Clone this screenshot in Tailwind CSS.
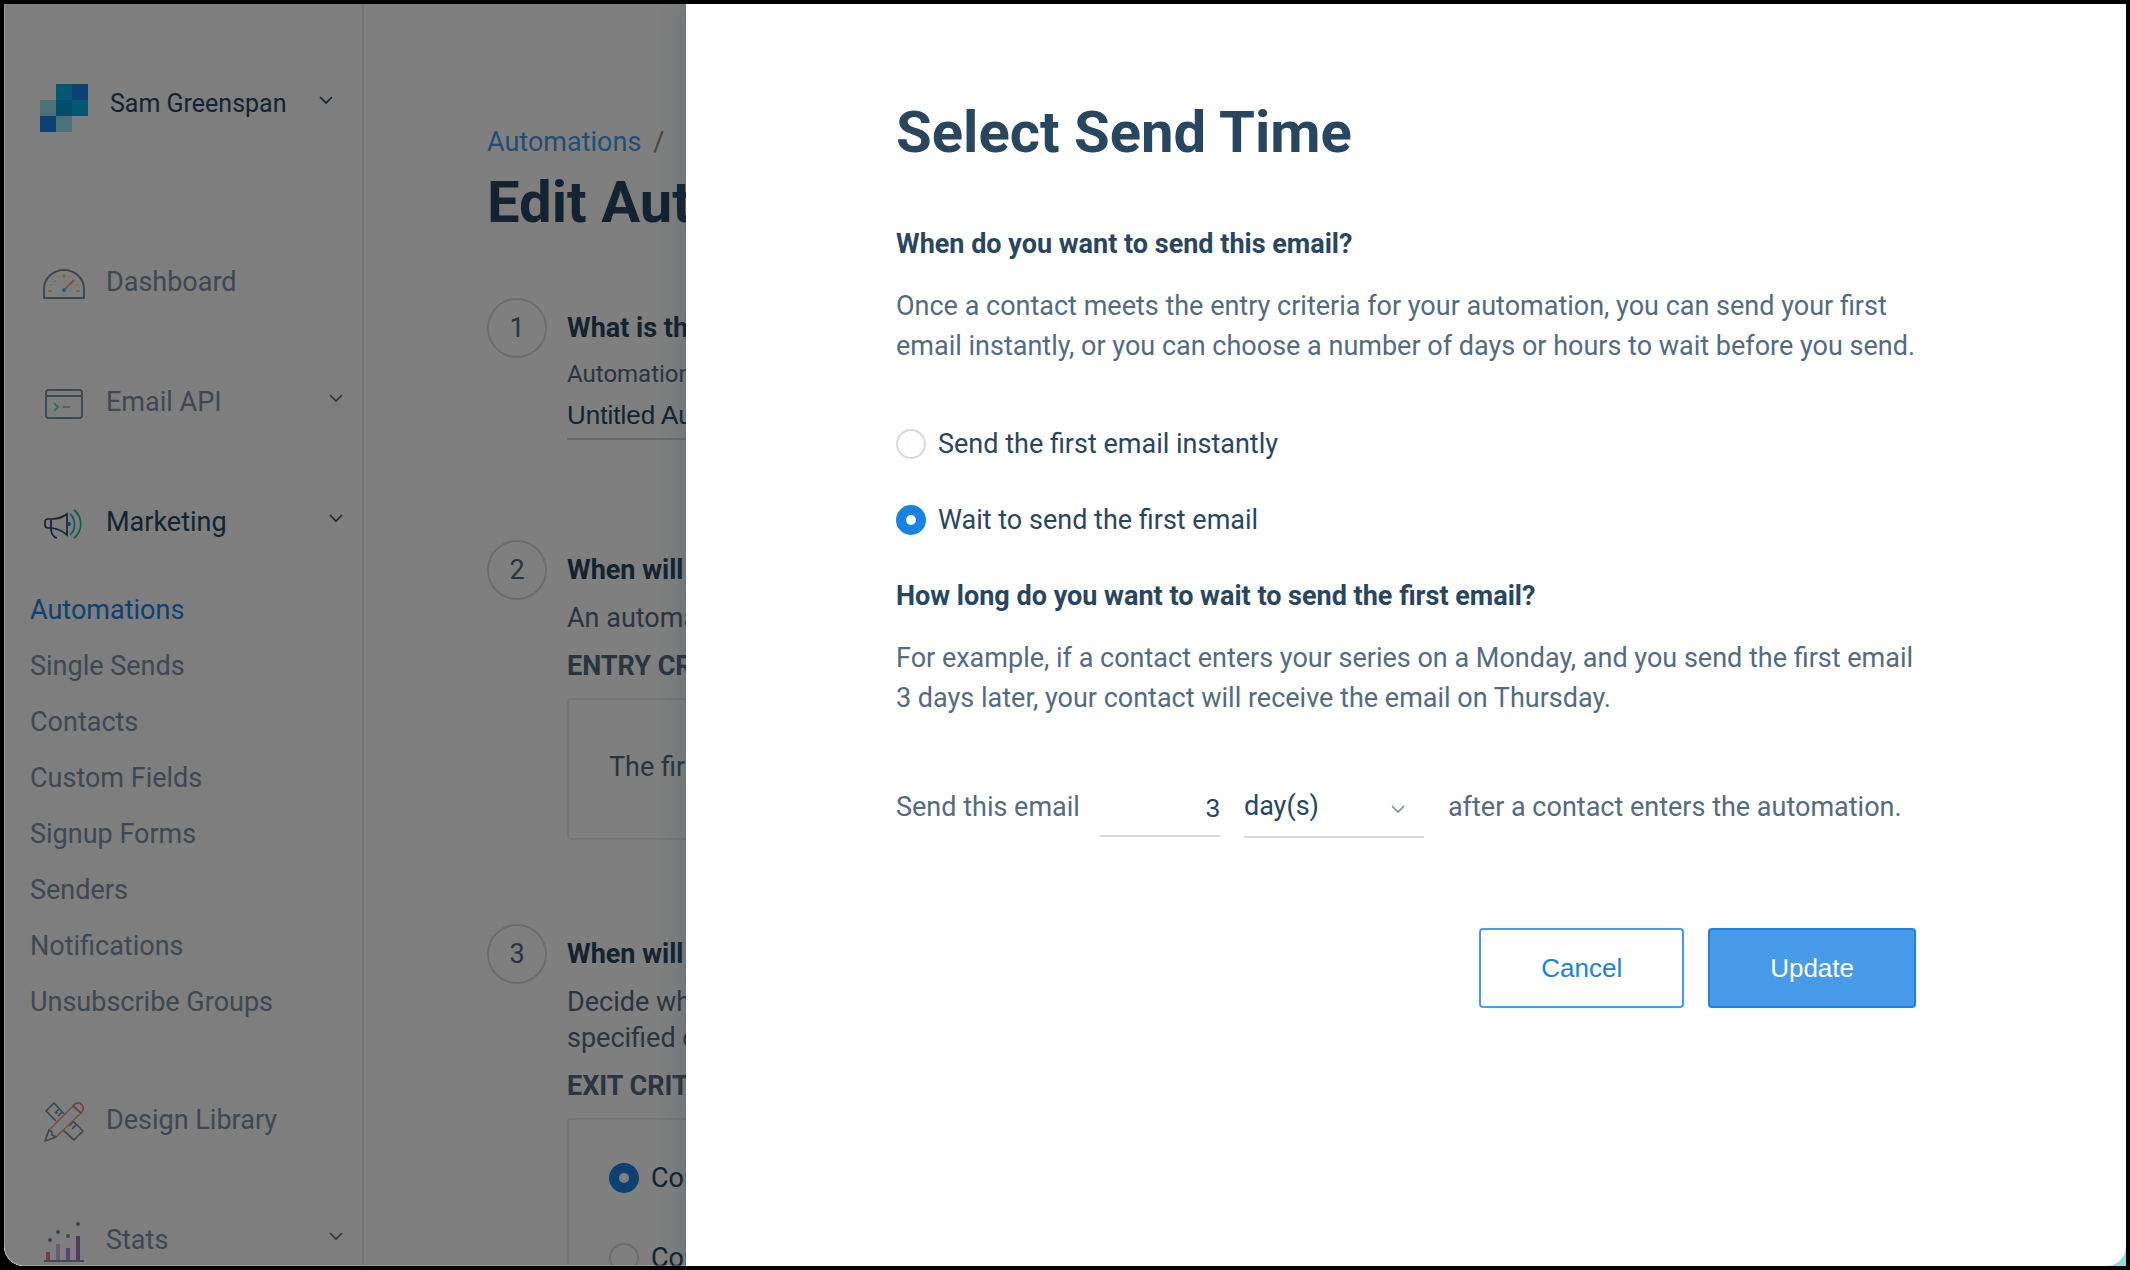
<!DOCTYPE html>
<html lang="en">
<head>
    <meta charset="UTF-8">
    <meta name="viewport" content="width=device-width, initial-scale=1.0">
    <title>Edit Automation</title>
    <script src="https://cdn.jsdelivr.net/npm/@tailwindcss/browser@4"></script>
</head>
<body class="bg-black font-['Roboto',sans-serif] text-[27px] leading-9 text-[#546b81]">
    <div class="h-screen p-1">
        <div class="h-full bg-linear-to-r from-black from-50% to-[#8edfe0] to-50%">
            <div class="relative h-full overflow-hidden rounded-b-[20px] bg-white flex">

                <!-- Sidebar -->
                <aside class="w-[360px] shrink-0 bg-[#fcfcfc] border-r-2 border-[#ebecee] text-[#7d90a5]">
                    <div class="h-[218px] pt-20 pl-9 pr-7 flex items-start">
                        <svg class="size-12 shrink-0" viewBox="0 0 48 48" shape-rendering="crispEdges" aria-hidden="true">
                            <path fill="#00b2e3" d="M16 0h16v16H16zM32 16h16v16H32z"/>
                            <path fill="#1a82e2" d="M32 0h16v16H32zM0 32h16v16H0z"/>
                            <path fill="#99e1f4" d="M0 16h16v16H0zM16 32h16v16H16z"/>
                            <path fill="#009dd9" d="M16 16h16v16H16z"/>
                        </svg>
                        <button class="ml-[22px] flex-1 h-10 flex items-center justify-between text-[25px] text-[#294661]">
                            Sam Greenspan
                            <svg class="size-4" viewBox="0 0 16 16" fill="none" stroke="currentColor" stroke-width="1.600" aria-hidden="true"><path d="M2 1l6 6 6-6"/></svg>
                        </button>
                    </div>

                    <nav>
                        <a href="#" class="h-[120px] pl-[38px] pr-[18px] flex items-center gap-5">
                            <span class="w-11 pt-1 flex justify-center">
                                <svg class="w-[42px] h-[30px]" viewBox="0 0 42 30" fill="none" stroke-width="2" aria-hidden="true">
                                    <path stroke="currentColor" d="M1 29V20a20 19 0 0 1 40 0v9z"/>
                                    <path stroke="#f0a090" d="M22 20l9-9"/>
                                    <circle cx="21" cy="21" r="2" fill="#5fb0f5"/>
                                    <path stroke="#f0d890" d="M5 22h4M33 22h4"/>
                                    <g fill="#f0d890"><circle cx="21" cy="7" r="2"/><circle cx="8" cy="16" r="1"/><circle cx="12" cy="12" r="1"/><circle cx="16" cy="8" r="1"/><circle cx="26" cy="8" r="1"/><circle cx="34" cy="16" r="1"/></g>
                                </svg>
                            </span>
                            Dashboard
                        </a>
                        <a href="#" class="h-[120px] pl-[38px] pr-[18px] flex items-center gap-5">
                            <span class="w-11 pt-1 flex justify-center">
                                <svg class="w-[38px] h-[30px]" viewBox="0 0 38 30" fill="none" stroke-width="2" aria-hidden="true">
                                    <rect stroke="currentColor" x="1" y="1" width="36" height="28" rx="3"/>
                                    <path stroke="currentColor" d="M1 7h36"/>
                                    <path stroke="#62e09c" d="M9 14l4 4-4 4"/>
                                    <path stroke="#a8d880" d="M18 18h7"/>
                                </svg>
                            </span>
                            <span class="flex-1">Email API</span>
                            <svg class="size-4" viewBox="0 0 16 16" fill="none" stroke="#546b81" stroke-width="1.600" aria-hidden="true"><path d="M2 1l6 6 6-6"/></svg>
                        </a>
                        <a href="#" class="h-[120px] pl-[38px] pr-[18px] flex items-center gap-5 text-[#294661]">
                            <span class="w-11 pt-1 flex justify-center">
                                <svg class="w-[40px] h-[30px]" viewBox="0 0 40 30" fill="none" stroke-width="1.700" aria-hidden="true">
                                    <path stroke="#3c2fa0" d="M7 11v8c0 5 2 9 6 10"/>
                                    <path stroke="currentColor" d="M8 10H4c-2 0-3 1-3 3v3c0 2 1 3 3 3h4c6 1 11 3 15 7V5c-4 3-9 5-15 5z"/>
                                    <circle cx="25" cy="15" r="2" fill="#1a82e2"/>
                                    <path stroke="#1ab5d8" d="M26 5c6 5 6 16 0 21"/>
                                    <path stroke="#18c078" d="M30 1c9 7 9 21 0 28"/>
                                </svg>
                            </span>
                            <span class="flex-1">Marketing</span>
                            <svg class="size-4" viewBox="0 0 16 16" fill="none" stroke="currentColor" stroke-width="1.600" aria-hidden="true"><path d="M2 1l6 6 6-6"/></svg>
                        </a>

                        <!-- Marketing submenu -->
                        <ul class="mb-[30px] pl-[26px] leading-[56px]">
                            <li><a href="#" class="text-[#1a82e2]">Automations</a></li>
                            <li><a href="#">Single Sends</a></li>
                            <li><a href="#">Contacts</a></li>
                            <li><a href="#">Custom Fields</a></li>
                            <li><a href="#">Signup Forms</a></li>
                            <li><a href="#">Senders</a></li>
                            <li><a href="#">Notifications</a></li>
                            <li><a href="#">Unsubscribe Groups</a></li>
                        </ul>

                        <a href="#" class="h-[120px] pl-[38px] pr-[18px] flex items-center gap-5">
                            <span class="w-11 pt-1 flex justify-center">
                                <svg class="size-10" viewBox="0 0 40 40" fill="none" stroke-width="1.700" stroke-linejoin="round" aria-hidden="true">
                                    <path stroke="currentColor" d="M12 19L2 9l8-8 10 11M11 11l4-4M14 14l4-4M11 11l3 0M19 28l11 10 9-9-10-10M25 24l4-4M28 27l4-4"/>
                                    <path stroke="#f0a08a" d="M29 4L5 28M37 11L12 35"/>
                                    <path stroke="#e87a7a" d="M29 4c3-4 7-4 9-1s1 6-1 8z"/>
                                    <path stroke="currentColor" d="M5 28L1 39l11-4-4-2v-3z"/>
                                </svg>
                            </span>
                            Design Library
                        </a>
                        <a href="#" class="h-[120px] pl-[38px] pr-[18px] flex items-center gap-5">
                            <span class="w-11 pt-1 flex justify-center">
                                <svg class="size-10" viewBox="0 0 40 40" aria-hidden="true">
                                    <path fill="currentColor" d="M0 38h40v2H0z"/>
                                    <path fill="#f47a98" d="M2 30h4v8H2z"/>
                                    <path fill="#dcb4e0" d="M12 22h4v16h-4z"/>
                                    <path fill="#a88af8" d="M22 26h4v12h-4z"/>
                                    <path fill="#ac6ac8" d="M32 14h4v24h-4z"/>
                                    <g fill="currentColor"><circle cx="6" cy="18" r="2"/><circle cx="14" cy="10" r="2"/><circle cx="24" cy="14" r="2"/><circle cx="34" cy="2" r="2"/></g>
                                </svg>
                            </span>
                            <span class="flex-1">Stats</span>
                            <svg class="size-4" viewBox="0 0 16 16" fill="none" stroke="#546b81" stroke-width="1.600" aria-hidden="true"><path d="M2 1l6 6 6-6"/></svg>
                        </a>
                    </nav>
                </aside>

                <!-- Page behind the drawer -->
                <main class="flex-1 pt-[120px] px-[123px]">
                    <div class="flex gap-3">
                        <a href="#" class="text-[#489be8]">Automations</a>
                        <span class="text-[#8c8c8c]">/</span>
                    </div>
                    <h1 class="mt-2.5 text-[58px] leading-[64px] font-bold text-[#294661]">Edit Automation</h1>

                    <section class="mt-16 flex gap-5">
                        <div class="size-[60px] shrink-0 rounded-full border-2 border-[#d5dae0] flex items-center justify-center">1</div>
                        <div class="flex-1 pt-3">
                            <h2 class="font-bold text-[#294661]">What is the name of your automation?</h2>
                            <label for="automation-name" class="mt-2.5 block text-[24px]">Automation Name</label>
                            <input id="automation-name" type="text" value="Untitled Automation" class="block w-full h-12 border-b-2 border-[#d5dae0] font-['Liberation_Sans',sans-serif] text-[26px] text-[#294661]">
                        </div>
                    </section>

                    <section class="mt-[100px] flex gap-5">
                        <div class="size-[60px] shrink-0 rounded-full border-2 border-[#d5dae0] flex items-center justify-center">2</div>
                        <div class="flex-1 pt-3">
                            <h2 class="font-bold text-[#294661]">When will contacts enter this automation?</h2>
                            <p class="mt-3">An automation starts once a contact meets the entry criteria.</p>
                            <h3 class="mt-3 font-bold">ENTRY CRITERIA</h3>
                            <div class="mt-3.5 rounded border-2 border-[#e9ebed] px-10 pt-[49px] pb-[53px]">The first time a contact is added to a list</div>
                        </div>
                    </section>

                    <section class="mt-[84px] flex gap-5">
                        <div class="size-[60px] shrink-0 rounded-full border-2 border-[#d5dae0] flex items-center justify-center">3</div>
                        <div class="flex-1 pt-3">
                            <h2 class="font-bold text-[#294661]">When will contacts exit this automation?</h2>
                            <p class="mt-3">Decide whether contacts exit after all emails are sent or once they no longer meet the<br>specified criteria.</p>
                            <h3 class="mt-3 font-bold">EXIT CRITERIA</h3>
                            <div class="mt-3.5 rounded border-2 border-[#e9ebed] px-10 py-10 flex flex-col gap-11 text-[#294661]">
                                <label class="flex items-center gap-3">
                                    <input type="radio" name="exit" checked class="appearance-none size-[30px] rounded-full border-2 border-[#d5dae0] checked:border-10 checked:border-[#1a82e2]">
                                    Contacts receive all emails in this automation
                                </label>
                                <label class="flex items-center gap-3">
                                    <input type="radio" name="exit" class="appearance-none size-[30px] rounded-full border-2 border-[#d5dae0] checked:border-10 checked:border-[#1a82e2]">
                                    Contacts no longer meet the entry criteria
                                </label>
                            </div>
                        </div>
                    </section>
                </main>

                <!-- Overlay -->
                <div class="absolute inset-0 rounded-b-[20px] border-l border-b border-white/20 bg-black/50"></div>

                <!-- Drawer -->
                <div role="dialog" aria-labelledby="drawer-title" class="absolute inset-y-0 right-0 w-[1440px] bg-white px-[210px] pt-24 leading-10 shadow-[0_0_24px_rgba(41,70,97,0.3)]">
                    <h2 id="drawer-title" class="text-[58px] leading-[64px] font-bold text-[#294661]">Select Send Time</h2>

                    <h3 class="mt-[60px] font-bold text-[#294661]">When do you want to send this email?</h3>
                    <p class="mt-[22px]">Once a contact meets the entry criteria for your automation, you can send your first email instantly, or you can choose a number of days or hours to wait before you send.</p>

                    <div class="mt-[58px] flex flex-col gap-9 text-[#294661]">
                        <label class="flex items-center gap-3">
                            <input type="radio" name="send-time" class="appearance-none size-[30px] rounded-full border-2 border-[#d5dae0] checked:border-10 checked:border-[#1a82e2]">
                            Send the first email instantly
                        </label>
                        <label class="flex items-center gap-3">
                            <input type="radio" name="send-time" checked class="appearance-none size-[30px] rounded-full border-2 border-[#d5dae0] checked:border-10 checked:border-[#1a82e2]">
                            Wait to send the first email
                        </label>
                    </div>

                    <h3 class="mt-9 font-bold text-[#294661]">How long do you want to wait to send the first email?</h3>
                    <p class="mt-[22px]">For example, if a contact enters your series on a Monday, and you send the first email 3 days later, your contact will receive the email on Thursday.</p>

                    <div class="mt-[58px] flex items-center">
                        <label for="wait-amount" class="mr-5">Send this email</label>
                        <input id="wait-amount" type="text" inputmode="numeric" value="3" class="mr-6 w-[120px] h-[60px] pt-1 border-b-2 border-[#d5dae0] text-right font-['Liberation_Sans',sans-serif] text-[26px] text-[#294661]">
                        <div class="relative mr-6">
                            <select id="wait-unit" aria-label="Wait unit" class="block appearance-none w-[180px] h-[62px] border-b-2 border-[#d5dae0] text-[#294661]">
                                <option>day(s)</option>
                                <option>hour(s)</option>
                            </select>
                            <svg class="absolute right-[18px] top-[29px] size-4 pointer-events-none" viewBox="0 0 16 16" fill="none" stroke="#7d90a5" stroke-width="1.600" aria-hidden="true"><path d="M2 1l6 6 6-6"/></svg>
                        </div>
                        <label for="wait-unit">after a contact enters the automation.</label>
                    </div>

                    <div class="mt-[90px] flex justify-end gap-6 font-['Liberation_Sans',sans-serif] text-[26px]">
                        <button class="h-20 px-[60px] rounded border-2 border-[#489be8] bg-white text-[#1a82e2]">Cancel</button>
                        <button class="h-20 px-[60px] rounded border-2 border-[#1a82e2] bg-[#489be8] text-white">Update</button>
                    </div>
                </div>

            </div>
        </div>
    </div>
</body>
</html>
